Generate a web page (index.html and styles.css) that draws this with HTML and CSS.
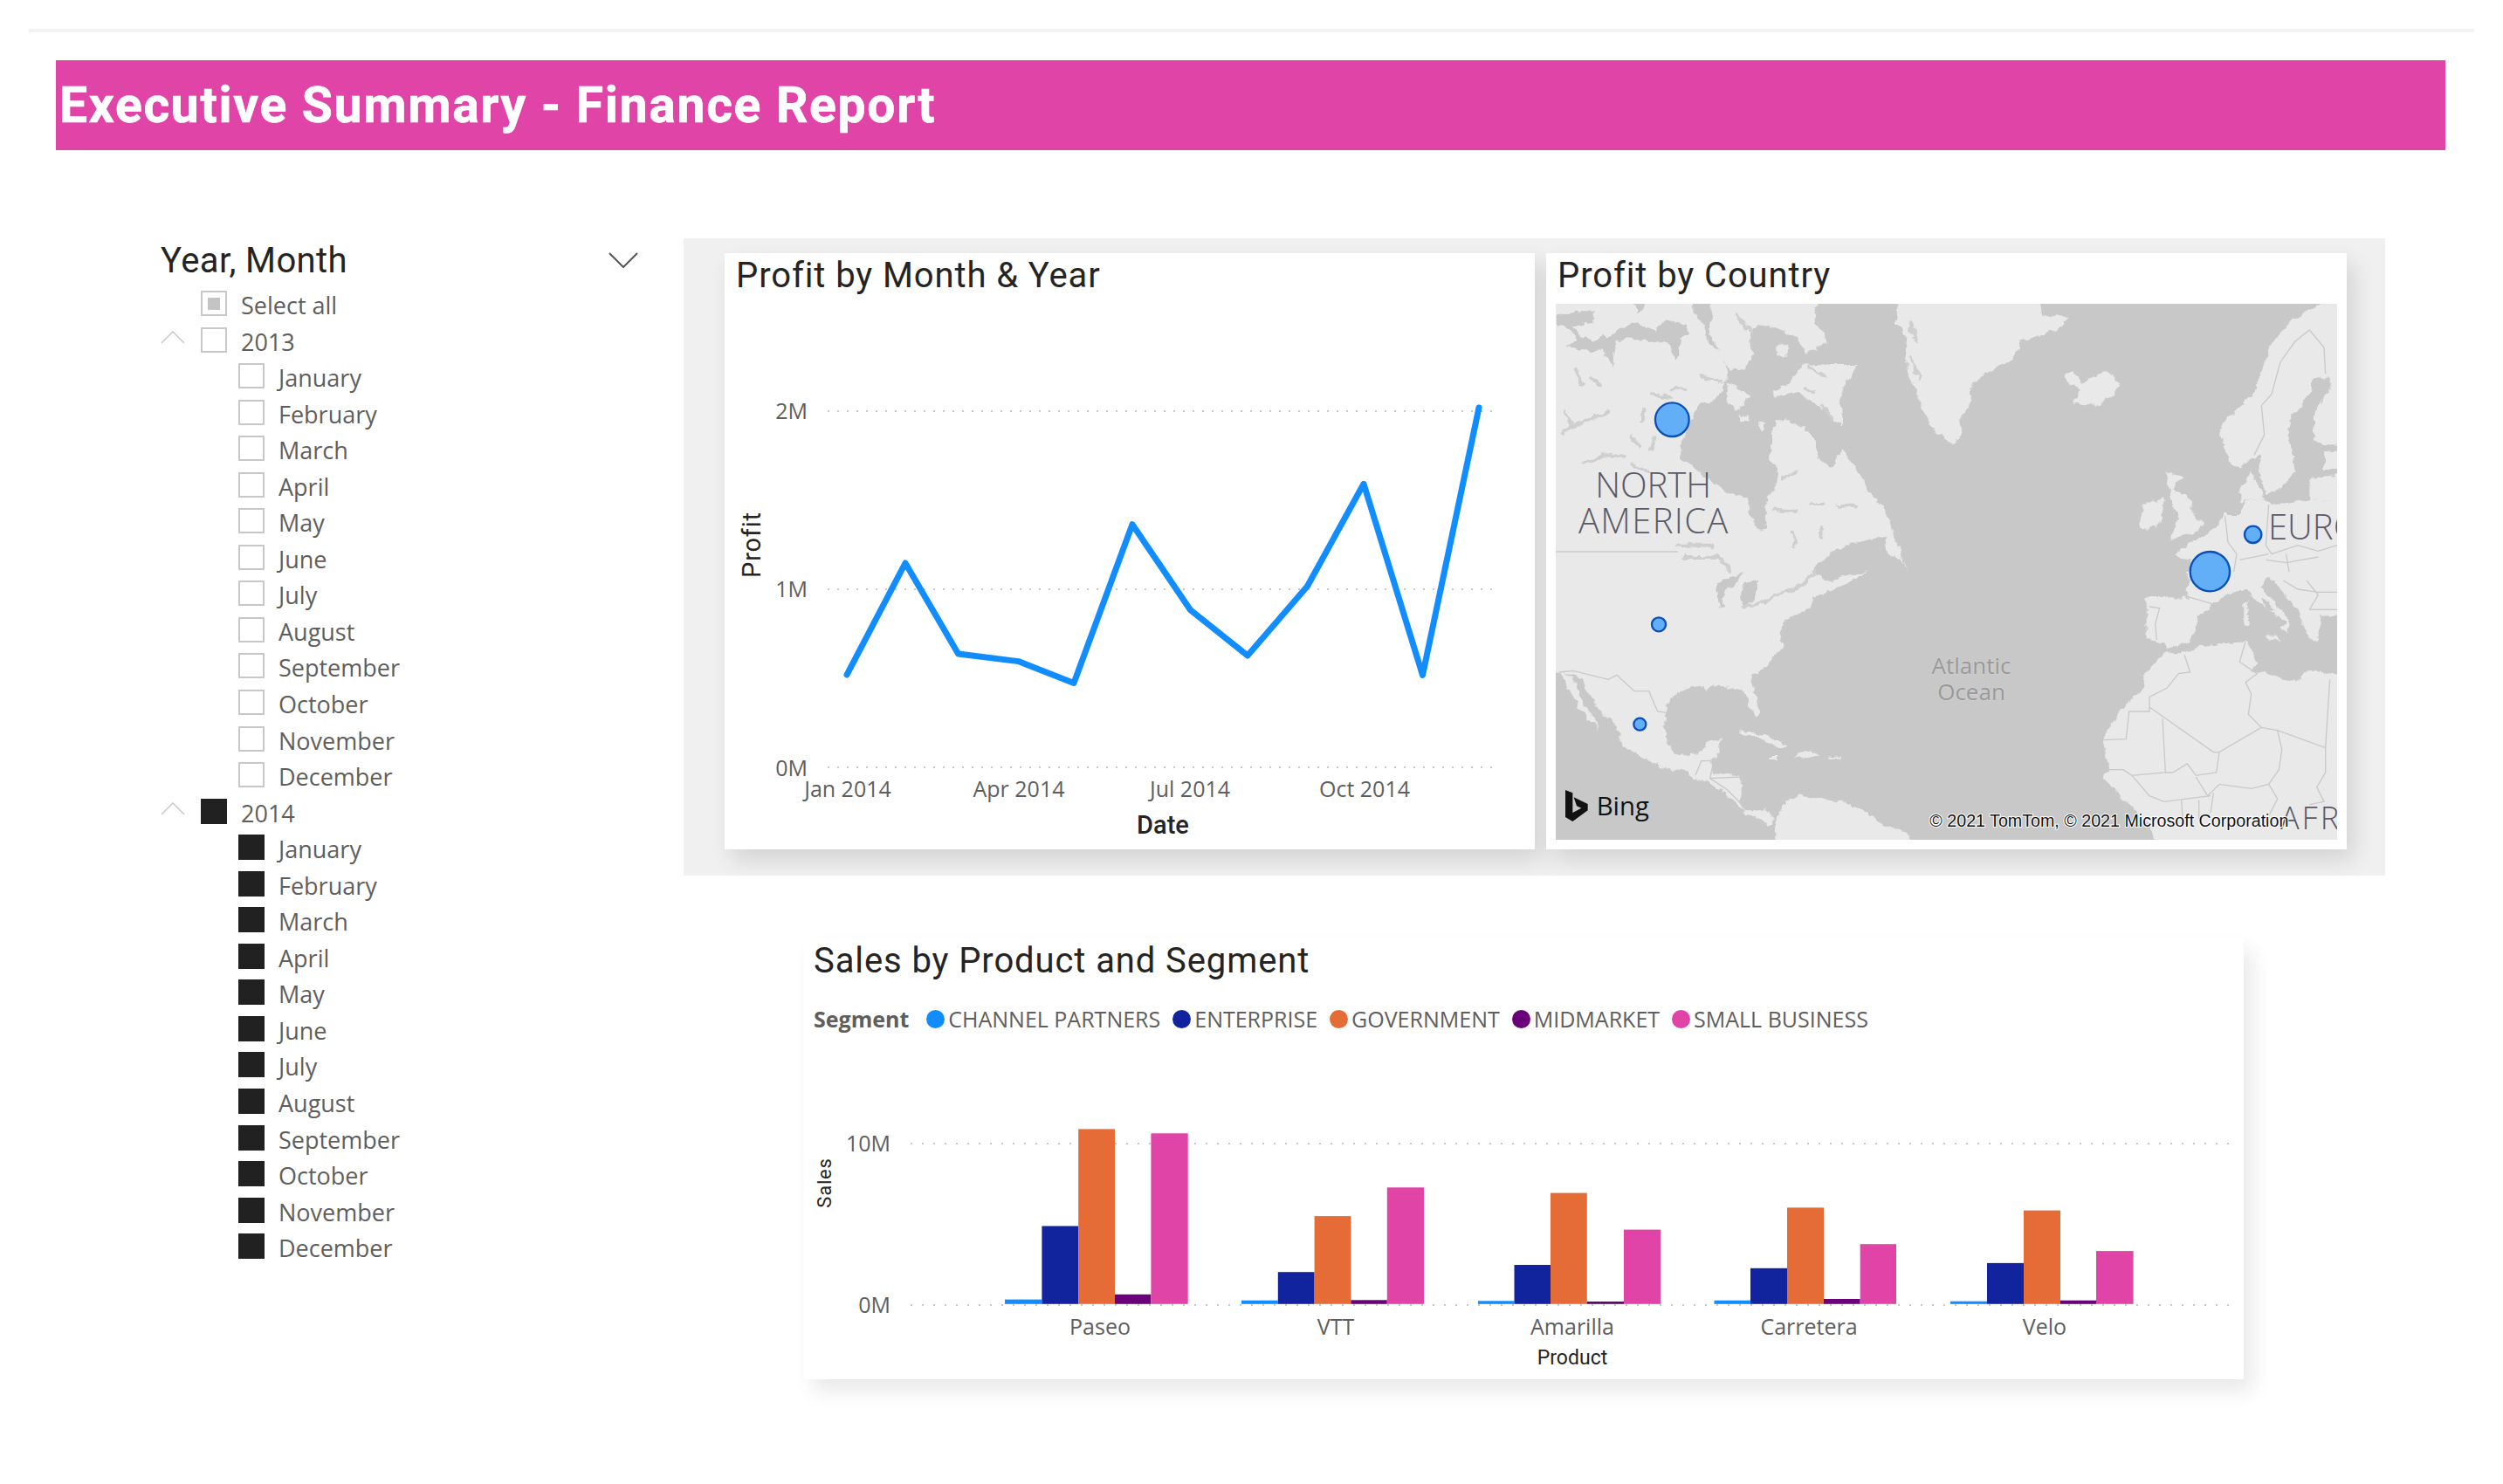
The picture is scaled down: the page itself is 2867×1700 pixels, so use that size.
FILE: index.html
```html
<!DOCTYPE html>
<html lang="en">
<head>
<meta charset="utf-8">
<title>Executive Summary - Finance Report</title>
<link rel="stylesheet" href="styles.css">
</head>
<body>
<div class="frame">
  <header class="banner"><h1 class="banner-title">Executive Summary - Finance Report</h1></header>
  <main class="content">
    <aside class="slicer">
      <div class="slicer-head">
        <h2 class="slicer-title">Year, Month</h2>
        <svg class="chevron" viewBox="0 0 34 18"><path d="M1 1 L17 17 L33 1"/></svg>
      </div>
      <ul class="slicer-list">
        <li class="row row-top"><span class="box box-part"></span><span class="label">Select all</span></li>
        <li class="row row-year"><svg class="caret" viewBox="0 0 28 15"><path d="M1 14 L14 1 L27 14"/></svg><span class="box"></span><span class="label">2013</span></li>
        <li class="row row-month"><span class="box"></span><span class="label">January</span></li>
        <li class="row row-month"><span class="box"></span><span class="label">February</span></li>
        <li class="row row-month"><span class="box"></span><span class="label">March</span></li>
        <li class="row row-month"><span class="box"></span><span class="label">April</span></li>
        <li class="row row-month"><span class="box"></span><span class="label">May</span></li>
        <li class="row row-month"><span class="box"></span><span class="label">June</span></li>
        <li class="row row-month"><span class="box"></span><span class="label">July</span></li>
        <li class="row row-month"><span class="box"></span><span class="label">August</span></li>
        <li class="row row-month"><span class="box"></span><span class="label">September</span></li>
        <li class="row row-month"><span class="box"></span><span class="label">October</span></li>
        <li class="row row-month"><span class="box"></span><span class="label">November</span></li>
        <li class="row row-month"><span class="box"></span><span class="label">December</span></li>
        <li class="row row-year"><svg class="caret" viewBox="0 0 28 15"><path d="M1 14 L14 1 L27 14"/></svg><span class="box box-on"></span><span class="label">2014</span></li>
        <li class="row row-month"><span class="box box-on"></span><span class="label">January</span></li>
        <li class="row row-month"><span class="box box-on"></span><span class="label">February</span></li>
        <li class="row row-month"><span class="box box-on"></span><span class="label">March</span></li>
        <li class="row row-month"><span class="box box-on"></span><span class="label">April</span></li>
        <li class="row row-month"><span class="box box-on"></span><span class="label">May</span></li>
        <li class="row row-month"><span class="box box-on"></span><span class="label">June</span></li>
        <li class="row row-month"><span class="box box-on"></span><span class="label">July</span></li>
        <li class="row row-month"><span class="box box-on"></span><span class="label">August</span></li>
        <li class="row row-month"><span class="box box-on"></span><span class="label">September</span></li>
        <li class="row row-month"><span class="box box-on"></span><span class="label">October</span></li>
        <li class="row row-month"><span class="box box-on"></span><span class="label">November</span></li>
        <li class="row row-month"><span class="box box-on"></span><span class="label">December</span></li>
      </ul>
    </aside>
    <div class="reports">
      <section class="panel">
        <article class="card card-line">
          <h2 class="card-title">Profit by Month &amp; Year</h2>
          <svg class="chart" width="928" height="631" viewBox="0 52 928 631">
            <g class="grid grid-line">
              <line x1="118" x2="882" y1="181" y2="181"/>
              <line x1="118" x2="882" y1="385" y2="385"/>
              <line x1="118" x2="882" y1="589" y2="589"/>
            </g>
            <g class="axis axis-end">
              <text x="95" y="190">2M</text>
              <text x="95" y="394">1M</text>
              <text x="95" y="599">0M</text>
            </g>
            <g class="axis axis-mid">
              <text x="141" y="623">Jan 2014</text>
              <text x="337" y="623">Apr 2014</text>
              <text x="533" y="623">Jul 2014</text>
              <text x="733" y="623">Oct 2014</text>
            </g>
            <text class="axis-name axis-mid name-date" x="502" y="665">Date</text>
            <text class="axis-name name-profit" transform="translate(41 334) rotate(-90)">Profit</text>
            <polyline class="trend" points="140,483 207,355 267.6,459 336.5,467.6 400,492.5 467,310.7 533.5,408.8 599,461 667.5,381.5 732,264.3 799.5,483.4 864,177"/>
          </svg>
        </article>
        <article class="card card-map">
          <h2 class="card-title">Profit by Country</h2>
          <svg class="map" width="895" height="614" viewBox="0 0 2685 1842">
            <defs>
              <filter id="rough" filterUnits="userSpaceOnUse" x="-80" y="-80" width="2845" height="2002">
                <feTurbulence type="fractalNoise" baseFrequency="0.035" numOctaves="3" seed="7" result="noise"/>
                <feDisplacementMap in="SourceGraphic" in2="noise" scale="26" xChannelSelector="R" yChannelSelector="G"/>
              </filter>
            </defs>
            <rect class="sea" width="2685" height="1842"/>
            <g filter="url(#rough)">
              <g class="land">
                <path d="M-60,-60 L470,-60 480,40 510,70 520,130 570,175 590,230 585,265 560,320 490,350 460,400 430,480 430,530 470,560 530,610 600,650 660,670 665,720 700,780 725,770 720,680 760,620 765,580 735,540 745,440 750,400 800,400 850,420 900,480 900,530 940,560 985,505 1030,560 1090,660 1150,740 1160,790 1210,921 1075,921 960,981 880,1011 880,1046 810,1071 780,1101 770,1131 785,1181 720,1241 675,1281 680,1321 700,1411 690,1421 655,1351 630,1321 540,1311 520,1331 505,1311 430,1326 385,1371 370,1451 385,1511 420,1551 490,1546 520,1506 570,1496 555,1561 530,1571 540,1611 630,1621 640,1681 630,1711 650,1741 720,1741 750,1766 740,1790 660,1751 590,1691 520,1641 470,1626 440,1601 380,1601 300,1561 230,1521 225,1491 200,1441 150,1391 100,1321 90,1291 60,1272 -60,1262 Z"/>
                <path d="M15,1266 L55,1278 80,1340 150,1461 110,1431 60,1351 Z"/>
                <path d="M540,-60 L900,-60 890,60 935,130 860,170 830,115 760,85 700,70 660,100 680,170 650,225 600,230 560,170 530,110 Z"/>
                <path d="M740,300 L800,275 855,205 940,210 1040,210 1000,265 975,330 985,420 900,350 830,300 760,318 Z"/>
                <path d="M590,270 L670,315 620,365 590,345 Z"/>
                <path d="M760,140 L800,140 795,182 760,180 Z"/>
                <path d="M635,385 L665,380 660,405 635,405 Z"/>
                <path d="M700,410 L718,408 716,432 700,432 Z"/>
                <path d="M1180,-60 L1170,60 1210,120 1200,200 1240,300 1290,430 1350,470 1360,490 1390,450 1390,400 1420,350 1430,280 1480,240 1570,190 1600,130 1720,90 1760,45 1670,40 1660,-60 Z"/>
                <path d="M1750,240 L1780,235 1810,270 1890,230 1940,270 1920,315 1850,350 1780,340 1800,300 1760,270 Z"/>
                <path d="M2745,-60 L2610,10 2550,40 2490,100 2450,150 2410,290 2370,340 2310,390 2280,440 2310,540 2350,565 2390,530 2420,520 2420,590 2440,650 2480,640 2540,580 2530,510 2515,430 2530,390 2590,310 2600,260 2660,250 2660,290 2610,370 2600,440 2620,480 2745,490 Z"/>
                <path d="M2350,640 L2390,580 2410,620 2440,670 2350,680 Z"/>
                <path d="M2590,600 L2745,580 2745,680 2590,670 Z"/>
                <path d="M2640,510 L2745,500 2745,570 2640,570 Z"/>
                <path d="M2745,680 L2590,670 2480,690 2450,685 2430,670 2370,680 2350,720 2300,720 2250,790 2180,820 2120,870 2180,880 2175,921 2170,1011 2030,1006 2030,1156 2090,1161 2100,1186 2180,1161 2210,1081 2255,1031 2300,1006 2350,981 2370,981 2400,1011 2450,1051 2510,1101 2490,1121 2515,1131 2520,1086 2470,1031 2425,971 2450,941 2490,981 2550,1051 2580,1131 2615,1161 2630,1071 2745,1061 Z"/>
                <path d="M2095,580 L2160,590 2120,640 2170,660 2200,740 2225,750 2210,780 2110,810 2140,740 2110,650 Z"/>
                <path d="M2015,690 L2090,670 2080,750 2045,775 2010,770 Z"/>
                <path d="M2365,1026 L2378,1026 2378,1106 2365,1106 Z"/>
                <path d="M2440,1141 L2480,1146 2485,1161 2445,1151 Z"/>
                <path d="M2745,1281 L2590,1261 2540,1301 2450,1271 2390,1261 2410,1231 2390,1181 2370,1156 2350,1161 2200,1181 2160,1201 2090,1201 2020,1281 2020,1321 1990,1351 1940,1391 1880,1501 1900,1601 1880,1631 1960,1711 2040,1791 2070,1902 2745,1902 Z"/>
                <path d="M745,1902 L755,1781 780,1721 830,1691 870,1691 980,1711 1060,1741 1130,1791 1210,1821 1240,1902 Z"/>
                <path d="M630,1476 L670,1466 740,1491 805,1521 760,1521 700,1491 Z"/>
                <path d="M815,1556 L860,1536 910,1551 870,1561 Z"/>
                <path d="M940,1553 L975,1553 975,1562 940,1562 Z"/>
                <path d="M730,1557 L765,1557 765,1566 730,1566 Z"/>
              </g>
              <g class="water">
                <path d="M0,40 L10,75 40,80 70,125 35,150 110,160 165,165 195,215 200,165 210,130 250,115 340,130 390,130 405,190 420,185 430,120 460,100 440,70 380,55 340,95 280,70 230,80 200,105 130,125 85,115 60,75 130,70 130,20 Z"/>
                <path d="M260,-20 L310,-20 300,30 280,30 Z"/>
                <path d="M555,966 L590,941 640,931 610,971 580,981 575,1046 560,1041 Z"/>
                <path d="M640,961 L700,951 680,1021 640,1046 Z"/>
                <path d="M880,921 L950,850 1010,825 1130,800 1140,860 1190,880 1210,921 1075,921 1000,935 940,955 Z"/>
                <path d="M2425,1011 L2445,1021 2480,1061 2450,1051 Z"/>
              </g>
              <g class="lakes">
                <path d="M30,370 55,415 20,450"/><path d="M55,425 120,395 175,375"/><path d="M70,230 90,280"/><path d="M120,250 150,280"/><path d="M300,360 300,400"/><path d="M100,545 170,520 240,525"/><path d="M260,460 290,490"/><path d="M340,460 330,500"/><path d="M500,250 570,270"/><path d="M400,295 440,292"/><path d="M330,310 390,320"/><path d="M260,550 320,580"/><path d="M780,595 830,578"/><path d="M750,710 830,710"/><path d="M880,690 920,690"/><path d="M970,695 1030,695"/><path d="M815,790 820,830"/><path d="M915,770 910,800"/><path d="M420,830 540,830"/><path d="M440,870 560,870 600,921"/><path d="M640,1046 700,1031 770,996 850,966 890,921"/>
                <path d="M860,290 885,300"/><path d="M915,350 950,395"/><path d="M870,215 925,250"/><path d="M620,40 670,100"/><path d="M1215,60 1240,130"/><path d="M1220,190 1250,260"/>
              </g>
            </g>
            <g class="borders">
              <path d="M0,852 L420,852"/>
              <g transform="translate(0 921)">
                <path d="M10,345 L60,340 180,370 210,355 270,410 320,410 350,480 385,485"/>
                <path d="M480,700 L500,650 530,650 545,640 530,710 640,705"/>
                <path d="M530,710 L590,750 650,810"/>
              </g>
              <g transform="translate(1350 0)">
                <path d="M1240,90 L1190,130 1140,200 1110,310 1075,350 1085,450 1050,520"/>
                <path d="M1240,90 L1290,150 1295,240"/>
                <path d="M950,730 L960,820 990,860 980,921"/>
                <path d="M1100,690 L1090,830 1110,860 1200,830 1270,850 1335,830"/>
                <path d="M1000,880 L1100,860"/>
                <path d="M1090,880 L1160,890 1270,870"/>
                <path d="M1160,860 L1170,921"/>
              </g>
              <g transform="translate(1350 921)">
                <path d="M1230,30 L1270,80 1240,130"/>
                <path d="M1150,30 L1200,60 1270,70 1335,70"/>
                <path d="M1240,130 L1335,130"/>
                <path d="M690,120 L725,125 710,180 715,235"/>
                <path d="M820,85 L905,110"/>
                <path d="M810,285 L830,345 790,350 750,400 690,430 690,480 620,480 610,575 530,578"/>
                <path d="M690,465 L910,620 930,620 1075,535 1030,490 1040,420 1020,380 1060,350 1000,310 1020,240"/>
                <path d="M735,505 L745,690 630,700 600,680 540,680"/>
                <path d="M930,620 L920,690 850,700 820,660 770,690 745,690"/>
                <path d="M1075,535 L1130,545 1295,605 1310,370"/>
                <path d="M1130,545 L1145,610 1135,680 1100,730 1040,745 930,730 890,770 850,705"/>
                <path d="M1295,605 L1295,690 1265,740 1290,790 1240,800"/>
                <path d="M630,700 L690,770 740,790 900,770"/>
                <path d="M800,785 L805,860 M860,785 L860,850 M910,760 L900,830"/>
                <path d="M1100,730 L1130,780 1090,860"/>
              </g>
            </g>
            <g class="markers">
              <circle cx="400" cy="398" r="58"/>
              <circle cx="354" cy="1102" r="24"/>
              <circle cx="289" cy="1445" r="21"/>
              <circle cx="2396" cy="793" r="29"/>
              <circle cx="2248" cy="920" r="68"/>
            </g>
            <g class="place">
              <text x="335" y="665">NORTH</text>
              <text class="place-spread" x="337" y="790">AMERICA</text>
              <text class="place-left" x="2448" y="810">EUROPE</text>
              <text class="place-left place-wide" x="2490" y="1806">AFRICA</text>
            </g>
            <g class="ocean">
              <text x="1428" y="1273">Atlantic</text>
              <text x="1428" y="1361">Ocean</text>
            </g>
            <path class="bing-mark" d="M33,1671 L58,1681 58,1749 88,1733 72,1726 62,1696 110,1719 110,1741 58,1779 33,1764 Z"/>
            <text class="bing" x="140" y="1758">Bing</text>
            <text class="credit" x="1285" y="1797">© 2021 TomTom, © 2021 Microsoft Corporation</text>
          </svg>
        </article>
      </section>
      <article class="card card-bars">
        <h2 class="card-title">Sales by Product and Segment</h2>
        <div class="legend">
          <strong class="legend-name">Segment</strong>
          <span class="legend-item"><i class="dot dot-channel"></i>CHANNEL PARTNERS</span>
          <span class="legend-item"><i class="dot dot-enterprise"></i>ENTERPRISE</span>
          <span class="legend-item"><i class="dot dot-government"></i>GOVERNMENT</span>
          <span class="legend-item"><i class="dot dot-midmarket"></i>MIDMARKET</span>
          <span class="legend-item"><i class="dot dot-small"></i>SMALL BUSINESS</span>
        </div>
        <svg class="chart" width="1649" height="393" viewBox="0 112 1649 393">
          <g class="grid grid-bars">
            <line x1="122" x2="1634" y1="235" y2="235"/>
            <line x1="122" x2="1634" y1="420" y2="420"/>
          </g>
          <g class="axis axis-end">
            <text x="99" y="244">10M</text>
            <text x="99" y="429">0M</text>
          </g>
          <g class="axis axis-mid">
            <text x="339" y="454">Paseo</text>
            <text x="609" y="454">VTT</text>
            <text x="880" y="454">Amarilla</text>
            <text x="1151" y="454">Carretera</text>
            <text x="1421" y="454">Velo</text>
          </g>
          <text class="axis-name axis-mid name-product" x="880" y="488">Product</text>
          <text class="axis-name name-sales" transform="translate(31 280) rotate(-90)">Sales</text>
          <g class="bars-channel">
            <rect x="230" y="413.6" width="42.4" height="5.2"/><rect x="501" y="414.7" width="41.8" height="4.1"/><rect x="771.9" y="415.3" width="41.6" height="3.5"/><rect x="1042.5" y="414.7" width="41.5" height="4.1"/><rect x="1313" y="415.7" width="42" height="3.1"/>
          </g>
          <g class="bars-enterprise">
            <rect x="272.4" y="329.5" width="41.8" height="89.3"/><rect x="542.8" y="382.2" width="41.8" height="36.6"/><rect x="813.5" y="374" width="41.5" height="44.8"/><rect x="1084" y="377.8" width="42" height="41"/><rect x="1355" y="371.9" width="42" height="46.9"/>
          </g>
          <g class="bars-government">
            <rect x="314.2" y="218.4" width="41.8" height="200.4"/><rect x="584.6" y="318.1" width="41.8" height="100.7"/><rect x="855" y="291.6" width="41.8" height="127.2"/><rect x="1126" y="308.4" width="42" height="110.4"/><rect x="1397" y="311.6" width="42" height="107.2"/>
          </g>
          <g class="bars-midmarket">
            <rect x="356" y="407.8" width="41.4" height="11"/><rect x="626.4" y="414.3" width="41.4" height="4.5"/><rect x="896.8" y="416" width="42.2" height="2.8"/><rect x="1168" y="413" width="41.7" height="5.8"/><rect x="1439" y="414.7" width="41" height="4.1"/>
          </g>
          <g class="bars-small">
            <rect x="397.4" y="223.3" width="42.3" height="195.5"/><rect x="667.8" y="285.3" width="42.2" height="133.5"/><rect x="939" y="333.6" width="42.3" height="85.2"/><rect x="1209.7" y="350.2" width="41.3" height="68.6"/><rect x="1480" y="358.1" width="42.6" height="60.7"/>
          </g>
        </svg>
      </article>
    </div>
  </main>
</div>
</body>
</html>
```
FILE: styles.css
```css
* { box-sizing: border-box; }
html, body { margin: 0; padding: 0; background: #fff; }
body { width: 2867px; height: 1700px; overflow: hidden; font-family: "Open Sans", sans-serif; }
h1, h2, ul { margin: 0; padding: 0; font-weight: 400; }
ul { list-style: none; }

.frame { margin: 33px 33px 0; border-top: 4px solid #f3f3f3; padding-top: 32px; }

.banner { margin-left: 31px; margin-right: 33px; height: 103px; background: #e044a7; display: flex; align-items: center; padding-left: 4px; }
.banner-title { font-family: Roboto, sans-serif; font-weight: 700; font-size: 57px; line-height: 60px; letter-spacing: 1.7px; color: #fff; -webkit-text-stroke: 0.6px #fff; }

.content { display: flex; align-items: flex-start; margin-top: 101px; margin-left: 151px; }

.slicer { width: 599px; flex: none; }
.slicer-head { width: 547px; height: 60px; display: flex; justify-content: space-between; align-items: flex-start; }
.slicer-title, .card-title { font-family: Roboto, sans-serif; font-size: 40px; line-height: 52px; color: #252423; white-space: nowrap; }
.slicer-title { letter-spacing: 0.4px; }
.card-title { letter-spacing: 0.9px; }
.chevron { width: 34px; height: 18px; margin-top: 16px; }
.chevron path { fill: none; stroke: #555; stroke-width: 2; }

.row { height: 41.55px; display: flex; align-items: flex-start; padding-left: 46px; color: #605e5c; font-size: 27px; line-height: 33px; }
.row-month { padding-left: 89px; }
.row-year { padding-left: 0; }
.caret { width: 28px; height: 15px; margin: 4px 18px 0 0; flex: none; }
.caret path { fill: none; stroke: #c8c8c8; stroke-width: 1.5; }
.box { width: 30px; height: 29px; flex: none; border: 2px solid #c8c8c8; margin-right: 16px; background: #fff; display: flex; align-items: center; justify-content: center; }
.box-on { background: #212121; border-color: #212121; }
.box-part::after { content: ""; width: 14px; height: 14px; background: #c4c4c4; }

.reports { width: 1949px; flex: none; }
.panel { height: 730px; background: #f0f0f0; padding: 17px 0 0 47px; display: flex; gap: 13px; align-items: flex-start; }
.card { background: #fff; box-shadow: 8px 12px 24px rgba(0, 0, 0, 0.12); }
.card-title { padding-left: 13px; }
.card-line { width: 928px; height: 683px; }
.card-map { width: 917px; height: 683px; padding: 0 11px; }
.card-map .card-title { padding-left: 2px; height: 58px; }
.card-bars { width: 1649px; height: 505px; margin: 72px 0 0 138px; box-shadow: 10px 14px 22px rgba(0, 0, 0, 0.09); }
.card-bars .card-title { padding-left: 11px; }

.chart, .map { display: block; }

.grid line { stroke: #c8c8c8; stroke-width: 2; stroke-linecap: butt; }
.grid-line line { stroke-dasharray: 2 9; }
.grid-bars line { stroke-dasharray: 2 11; }

.axis { font-size: 25px; fill: #605e5c; }
.axis-end { text-anchor: end; }
.axis-mid { text-anchor: middle; }
.axis-name { font-family: Roboto, sans-serif; font-weight: 500; fill: #252423; }
.name-date { font-size: 29px; }
.name-profit { font-size: 29px; font-weight: 400; text-anchor: middle; letter-spacing: 0.8px; }
.name-product { font-size: 23px; font-weight: 400; }
.name-sales { font-size: 22px; font-weight: 400; text-anchor: middle; letter-spacing: 0.8px; }

.trend { fill: none; stroke: #118dff; stroke-width: 7; stroke-linejoin: round; stroke-linecap: round; }

.legend { margin-top: 20px; height: 40px; padding-left: 11px; display: flex; align-items: center; gap: 14px; font-size: 25px; color: #605e5c; }
.legend-name { font-weight: 700; margin-right: 6px; }
.legend-item { display: flex; align-items: center; gap: 4px; white-space: nowrap; }
.dot { width: 21px; height: 21px; border-radius: 50%; flex: none; }
.dot-channel { background: #118dff; }
.dot-enterprise { background: #12239e; }
.dot-government { background: #e66c37; }
.dot-midmarket { background: #6b007b; }
.dot-small { background: #e044a7; }

.bars-channel { fill: #118dff; }
.bars-enterprise { fill: #12239e; }
.bars-government { fill: #e66c37; }
.bars-midmarket { fill: #6b007b; }
.bars-small { fill: #e044a7; }

.sea { fill: #c8c8c8; }
.land { fill: #e9e9e9; }
.water { fill: #c8c8c8; }
.lakes path { fill: none; stroke: #cfcfcf; stroke-width: 12; stroke-linecap: round; stroke-linejoin: round; }
.borders path { fill: none; stroke: #cbc8c8; stroke-width: 4; }
.markers circle { fill: #62aef7; stroke: #0a50b8; stroke-width: 7; }
.place { font-size: 120px; font-weight: 300; fill: #5a5a68; text-anchor: middle; }
.place-spread { letter-spacing: 4px; }
.place-left { text-anchor: start; }
.place-wide { font-size: 108px; letter-spacing: 9px; }
.ocean { font-size: 78px; font-weight: 400; fill: #999; text-anchor: middle; stroke: #e6e6e6; stroke-width: 1px; paint-order: stroke; }
.bing-mark { fill: #111; }
.bing { font-size: 88px; fill: #111; }
.credit { font-family: "Liberation Sans", sans-serif; font-size: 59px; fill: #111; paint-order: stroke; stroke: #fff; stroke-width: 6px; }
```
